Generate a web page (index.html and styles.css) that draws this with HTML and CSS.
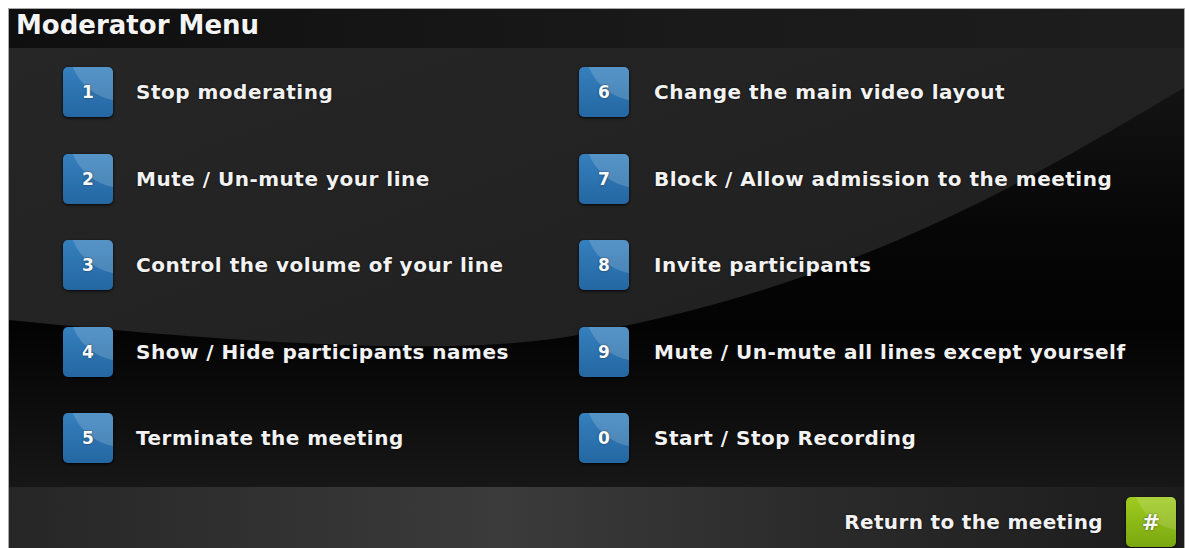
FILE: index.html
```html
<!DOCTYPE html>
<html lang="en">
<head>
<meta charset="utf-8">
<title>Moderator Menu</title>
<link rel="stylesheet" href="styles.css">
</head>
<body>
  <div class="panel">
    <div class="panel-title">Moderator Menu</div>
    <ol class="menu">
      <li class="item"><span class="key">1</span><span class="label">Stop moderating</span></li>
      <li class="item"><span class="key">6</span><span class="label">Change the main video layout</span></li>
      <li class="item"><span class="key">2</span><span class="label">Mute / Un-mute your line</span></li>
      <li class="item"><span class="key">7</span><span class="label">Block / Allow admission to the meeting</span></li>
      <li class="item"><span class="key">3</span><span class="label">Control the volume of your line</span></li>
      <li class="item"><span class="key">8</span><span class="label">Invite participants</span></li>
      <li class="item"><span class="key">4</span><span class="label">Show / Hide participants names</span></li>
      <li class="item"><span class="key">9</span><span class="label">Mute / Un-mute all lines except yourself</span></li>
      <li class="item"><span class="key">5</span><span class="label">Terminate the meeting</span></li>
      <li class="item"><span class="key">0</span><span class="label">Start / Stop Recording</span></li>
    </ol>
    <div class="panel-footer">
      <span class="return-label">Return to the meeting</span>
      <span class="key key-green">#</span>
    </div>
  </div>
</body>
</html>
```
FILE: styles.css
```css
html, body {
  margin: 0;
  padding: 0;
  background: #ffffff;
  overflow: hidden;
}

body {
  padding-top: 8px;
  font-family: "DejaVu Sans", Verdana, sans-serif;
}

.panel {
  margin-left: 8px;
  width: 1175px;
  border: 1px solid #a8a8a8;
  border-bottom: none;
  background: #000;
}

.panel-title {
  height: 39px;
  padding-left: 7px;
  background: linear-gradient(90deg, #0f0f0f, #1a1a1a 60%, #1d1d1d);
  color: #f4f4f4;
  font-weight: bold;
  font-size: 26px;
  line-height: 33px;
  text-shadow: 0 0 2px rgba(0, 0, 0, 0.9);
}

.menu {
  position: relative;
  list-style: none;
  margin: 0;
  padding: 19px 0 24px 54px;
  display: grid;
  grid-template-columns: 516px 1fr;
  grid-auto-rows: 50px;
  row-gap: 36.5px;
  background: linear-gradient(#171717 0, #060606 42%, #030303 64%, #171717 100%);
}

/* glossy sweep across the upper part of the menu */
.menu::before {
  content: "";
  position: absolute;
  inset: 0;
  background: linear-gradient(160deg, #262626 0, #222222 50%, #1d1d1d 100%);
  clip-path: path("M0 0 L1175 0 L1175 40 C1060 106 860 240 551 290 C450 304 300 302 0 272 Z");
}

.item {
  position: relative;
  display: flex;
  align-items: center;
  gap: 23px;
}

.item:nth-child(even) {
  gap: 25px;
}

.key {
  flex: none;
  width: 50px;
  height: 50px;
  border-radius: 5px;
  display: flex;
  align-items: center;
  justify-content: center;
  color: #fafafa;
  font-weight: bold;
  font-size: 17px;
  background:
    radial-gradient(circle at 120% -40%, rgba(255, 255, 255, 0.16) 0, rgba(255, 255, 255, 0.16) 58%, rgba(255, 255, 255, 0) 59%),
    linear-gradient(#3580bd, #2467a2);
  box-shadow: 0 1px 3px rgba(0, 0, 0, 0.9);
  text-shadow: 0 0 2px rgba(0, 0, 0, 0.6);
}

.label {
  color: #f2f2f2;
  font-weight: bold;
  font-size: 20px;
  letter-spacing: 0.5px;
  white-space: nowrap;
  text-shadow: 0 0 2px rgba(0, 0, 0, 0.9);
}

.panel-footer {
  height: 64px;
  padding: 10px 8px 0 0;
  box-sizing: border-box;
  display: flex;
  justify-content: flex-end;
  align-items: flex-start;
  gap: 23px;
  background: linear-gradient(90deg, #262626 0, #353535 30%, #3b3b3b 42%, #2b2b2b 68%, #1c1c1c 100%);
}

.return-label {
  color: #f2f2f2;
  font-weight: bold;
  font-size: 20px;
  letter-spacing: 0.35px;
  line-height: 50px;
  white-space: nowrap;
  text-shadow: 0 0 2px rgba(0, 0, 0, 0.9);
}

.key-green {
  font-size: 22px;
  background:
    radial-gradient(circle at 120% -40%, rgba(255, 255, 255, 0.14) 0, rgba(255, 255, 255, 0.14) 58%, rgba(255, 255, 255, 0) 59%),
    linear-gradient(#9fcb1f, #7aa70f);
}
```
